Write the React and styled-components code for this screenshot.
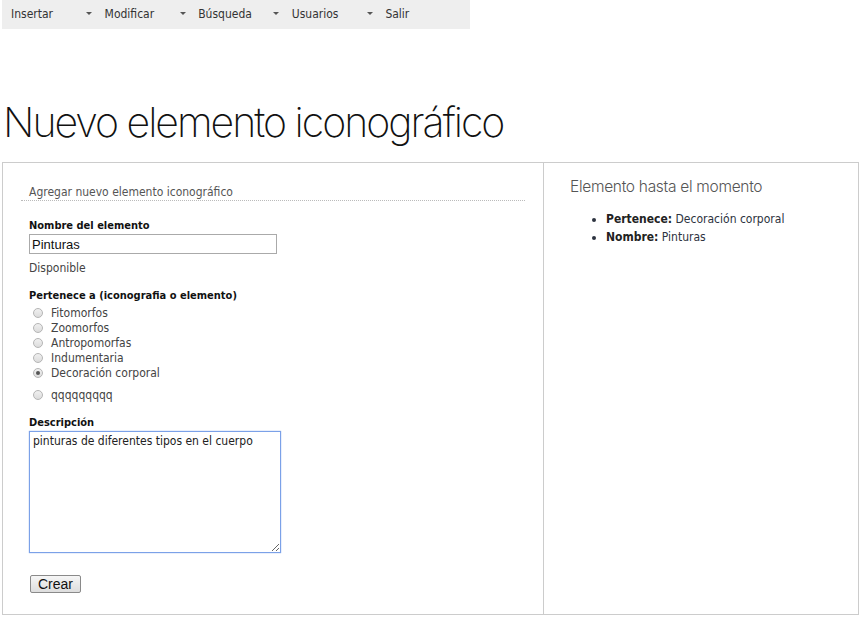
import React from "react";
import styled, { createGlobalStyle } from "styled-components";

const Global = createGlobalStyle`
  html, body { margin: 0; padding: 0; background: #fff; }
  body { font-family: "DejaVu Sans Condensed", "DejaVu Sans", Verdana, sans-serif; font-size: 12px; color: #333; }
`;

const Page = styled.div`
  padding: 0 6px 0 2px;
  display: flex;
  flex-direction: column;
`;

const Nav = styled.ul`
  list-style: none;
  margin: 0;
  padding: 0;
  display: flex;
  width: 468px;
  height: 29px;
  background: #eeeeee;
`;

const NavItem = styled.li`
  width: 93.6px;
  box-sizing: border-box;
  padding: 0 0 2px 9px;
  display: flex;
  align-items: center;
  font-size: 12px;
  color: #333;
`;

const NavLabel = styled.span`
  flex: 0 0 66px;
`;

const Caret = styled.span`
  width: 0;
  height: 0;
  border-left: 3px solid transparent;
  border-right: 3px solid transparent;
  border-top: 3px solid #555;
  margin-left: 9px;
`;

const Title = styled.h1`
  margin: 68px 0 15px 1px;
  font-family: "Inter", sans-serif;
  font-weight: 200;
  font-size: 41px;
  letter-spacing: -2px;
  line-height: 50px;
  color: #111;
`;

const Box = styled.div`
  border: 1px solid #cccccc;
  box-sizing: border-box;
  display: grid;
  grid-template-columns: 541px 1fr;
  height: 453px;
`;

const FormCol = styled.div`
  border-right: 1px solid #cccccc;
  padding: 22px 18px 0 18px;
`;

const Legend = styled.div`
  padding: 0 0 1px 8px;
  line-height: 14px;
  border-bottom: 1px dotted #bbb;
  font-size: 12px;
  color: #555;
  margin-bottom: 18px;
`;

const Field = styled.div`
  padding-left: 8px;
  margin-bottom: ${(p) => p.gap || 0}px;
`;

const Label = styled.div`
  font-weight: bold;
  color: #111;
  font-size: 11px;
  line-height: 13px;
  margin-bottom: ${(p) => p.gap ?? 2}px;
`;

const TextInput = styled.input`
  display: block;
  width: 248px;
  height: 20px;
  box-sizing: border-box;
  border: 1px solid #aaa;
  padding: 1px 2px;
  font-family: "Liberation Sans", Arial, sans-serif;
  font-size: 13px;
  color: #111;
  outline: none;
  margin: 0;
`;

const Note = styled.div`
  font-size: 12px;
  line-height: 14px;
  color: #444;
  margin-top: 7px;
`;

const RadioList = styled.div`
  display: flex;
  flex-direction: column;
`;

const RadioRow = styled.label`
  display: flex;
  align-items: center;
  height: 15px;
  font-size: 12px;
  color: #444;
  margin-top: ${(p) => p.extra || 0}px;
`;

const RadioDot = styled.span`
  width: 10px;
  height: 10px;
  border-radius: 50%;
  border: 1px solid #b5b5b5;
  background: linear-gradient(#f0f0f0, #dcdcdc);
  box-sizing: border-box;
  margin: 0 8px 0 4px;
  display: flex;
  align-items: center;
  justify-content: center;
  &::after {
    content: "";
    width: 4px;
    height: 4px;
    border-radius: 50%;
    background: ${(p) => (p.checked ? "#555" : "transparent")};
  }
`;

const TextArea = styled.textarea`
  display: block;
  width: 252px;
  height: 122px;
  box-sizing: border-box;
  border: 1px solid #7ba1e8;
  box-shadow: 0 0 1px #7ba1e8;
  padding: 2px 3px;
  font-family: "DejaVu Sans Condensed", "DejaVu Sans", Verdana, sans-serif;
  font-size: 12px;
  color: #222;
  resize: both;
  outline: none;
  margin: 0;
`;

const Button = styled.button`
  display: block;
  font-family: "Liberation Sans", Arial, sans-serif;
  font-size: 14px;
  color: #111;
  padding: 0 7px;
  height: 18px;
  line-height: 16px;
  border: 1px solid #8a8a8a;
  border-radius: 2px;
  background: linear-gradient(#f6f6f6, #dddddd);
  margin: 22px 0 0 1px;
`;

const SideCol = styled.div`
  padding: 14px 26px 0 26px;
`;

const SideTitle = styled.h2`
  margin: 0;
  font-family: "Inter", sans-serif;
  font-weight: 300;
  font-size: 15.5px;
  line-height: 20px;
  color: #555;
  letter-spacing: -0.3px;
`;

const List = styled.ul`
  margin: 13px 0 0 0;
  padding-left: 36px;
  font-size: 12px;
  color: #2d3340;
  li { line-height: 18px; }
  b { color: #222; }
`;

const navItems = ["Insertar", "Modificar", "Búsqueda", "Usuarios", "Salir"];
const options = ["Fitomorfos", "Zoomorfos", "Antropomorfas", "Indumentaria", "Decoración corporal"];

export default function App() {
  return (
    <>
      <Global />
      <Page>
        <Nav>
          {navItems.map((n, i) => (
            <NavItem key={n}>
              <NavLabel>{n}</NavLabel>
              {i < navItems.length - 1 && <Caret />}
            </NavItem>
          ))}
        </Nav>
        <Title>Nuevo elemento iconográfico</Title>
        <Box>
          <FormCol>
            <Legend>Agregar nuevo elemento iconográfico</Legend>
            <Field gap={14}>
              <Label>Nombre del elemento</Label>
              <TextInput defaultValue="Pinturas" />
              <Note>Disponible</Note>
            </Field>
            <Field gap={14}>
              <Label gap={3}>Pertenece a (iconografia o elemento)</Label>
              <RadioList>
                {options.map((o, i) => (
                  <RadioRow key={o}>
                    <RadioDot checked={i === 4} />
                    {o}
                  </RadioRow>
                ))}
                <RadioRow extra={7}>
                  <RadioDot />
                  qqqqqqqqq
                </RadioRow>
              </RadioList>
            </Field>
            <Field>
              <Label>Descripción</Label>
              <TextArea defaultValue="pinturas de diferentes tipos en el cuerpo" />
              <Button>Crear</Button>
            </Field>
          </FormCol>
          <SideCol>
            <SideTitle>Elemento hasta el momento</SideTitle>
            <List>
              <li><b>Pertenece:</b> Decoración corporal</li>
              <li><b>Nombre:</b> Pinturas</li>
            </List>
          </SideCol>
        </Box>
      </Page>
    </>
  );
}
